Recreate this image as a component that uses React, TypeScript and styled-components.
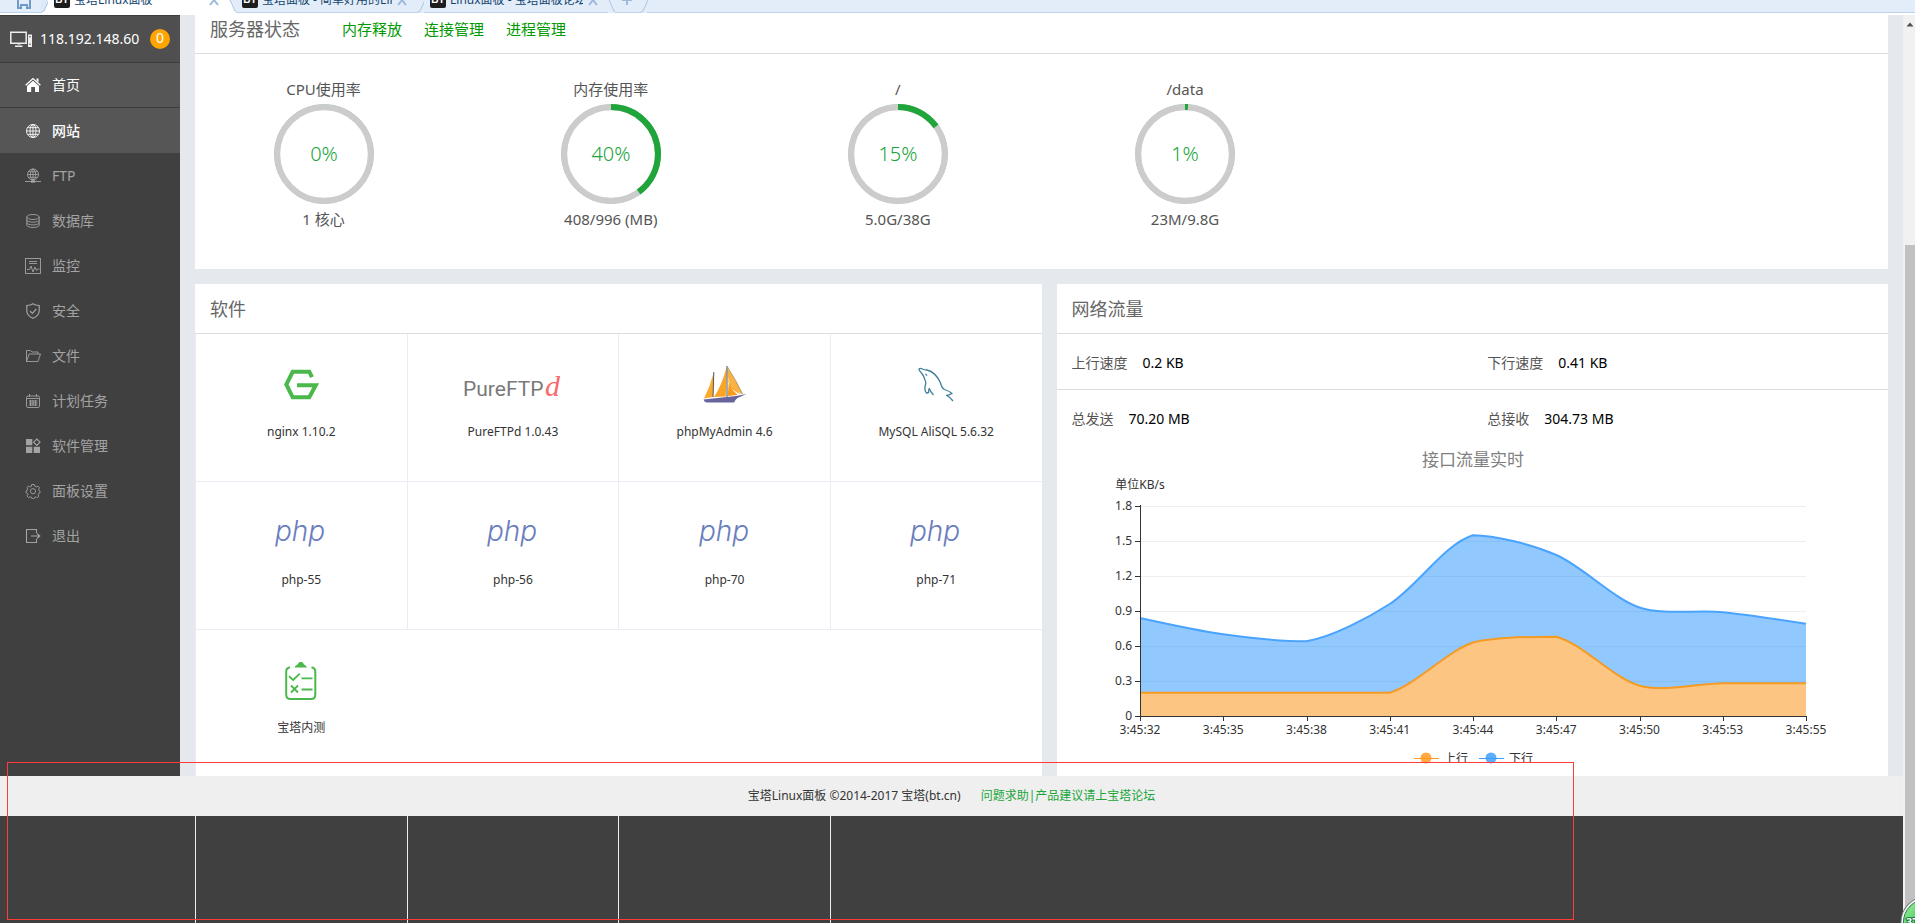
import React, { useLayoutEffect, useRef, useState } from "react";
import styled, { createGlobalStyle, css } from "styled-components";

const FONT = '"Noto Sans", "Noto Sans CJK SC", sans-serif';

const GlobalStyle = createGlobalStyle`
  * { box-sizing: border-box; }
  body { margin: 0; background: #404040; font: 14px/20px ${FONT}; color: #555; }
  a { color: inherit; text-decoration: none; }
  button { font: inherit; color: inherit; border: 0; padding: 0; background: none; cursor: pointer; }
  h2, p, dl, dd, dt, ul { margin: 0; padding: 0; font-weight: normal; }
  ul { list-style: none; }
  svg { display: block; flex: none; }
`;

/* ---------- page frame ---------- */

const Page = styled.div`
  display: flex;
  flex-direction: column;
  min-height: 100vh;
`;
const Frame = styled.div`
  display: flex;
  flex: 1;
`;
const Panel = styled.div`
  display: flex;
  flex-direction: column;
  flex: 1;
  min-width: 0;
`;
const Upper = styled.div`
  display: flex;
`;

/* ---------- browser tabs ---------- */

const TabStrip = styled.div`
  height: 15px;
  background: #fff;
  overflow: hidden;
`;
const TabRow = styled.div`
  display: flex;
  align-items: flex-end;
  height: 13px;
  background: #e3edf9;
  font-size: 12px;
  color: #14466f;
`;
const Tab = styled.div<{ $width: number; $active?: boolean }>`
  display: flex;
  align-items: center;
  gap: 4px;
  width: ${(p) => p.$width}px;
  height: 26px;
  flex: none;
  padding: 0 10px 0 6px;
  background: ${(p) => (p.$active ? "#fff" : "#e3edf9")};
  border-bottom: 1px solid ${(p) => (p.$active ? "#fff" : "#bdd3ec")};
`;
const TabRest = styled.div`
  flex: 1;
  border-bottom: 1px solid #bdd3ec;
`;
const TabTitle = styled.button`
  display: flex;
  align-items: center;
  gap: 4px;
  flex: 1;
  min-width: 0;
  overflow: hidden;
  white-space: nowrap;
`;
const TabBadge = styled.span`
  width: 16px;
  height: 16px;
  flex: none;
  border-radius: 2px;
  background: #1d1d1d;
  color: #fff;
  font: bold 10px/16px "Liberation Sans", sans-serif;
  text-align: center;
`;
const IconButton = styled.button`
  display: flex;
  color: #9db9dc;
`;
const SlantSvg = styled.svg`
  margin: 0 -1px;
`;

function Slant({ back, left, right }: { back?: boolean; left: string; right: string }) {
  const line = back ? "M1 0 L6 11 L8 12.5" : "M8 0 L3 11 L0 12.5";
  const fill = back ? "M0 0 H1 L6 11 L8 13 H0Z" : "M0 0 H8 L3 11 L0 13Z";
  return (
    <SlantSvg width="8" height="13" viewBox="0 0 8 13" aria-hidden="true">
      <rect width="8" height="13" fill={right} />
      <path d={fill} fill={left} />
      <path d={line} fill="none" stroke="#aac5e3" />
    </SlantSvg>
  );
}

function CloseMark() {
  return (
    <IconButton aria-label="关闭">
      <svg width="12" height="12" viewBox="0 0 12 12" fill="none" stroke="currentColor" strokeWidth="2">
        <path d="M2 1 L10 11 M10 1 L2 11" />
      </svg>
    </IconButton>
  );
}

function BrowserTabs() {
  return (
    <TabStrip>
      <TabRow>
        <Tab $width={42}>
          <IconButton aria-label="主页">
            <svg width="32" height="20" viewBox="0 0 32 20" fill="none" stroke="#6f9bcb" strokeWidth="2">
              <path d="M7 9 L18 0 L29 9 H24 V18 H21 V15 H15 V18 H12 V9Z" />
            </svg>
          </IconButton>
        </Tab>
        <Slant left="#dce9f8" right="#fff" />
        <Tab $width={182} $active>
          <TabTitle><TabBadge>BT</TabBadge>宝塔Linux面板</TabTitle>
          <CloseMark />
        </Tab>
        <Slant back left="#fff" right="#e3edf9" />
        <Tab $width={182}>
          <TabTitle><TabBadge>BT</TabBadge>宝塔面板 - 简单好用的Linux</TabTitle>
          <CloseMark />
        </Tab>
        <Slant left="#e3edf9" right="#e3edf9" />
        <Tab $width={185}>
          <TabTitle><TabBadge>BT</TabBadge>Linux面板 - 宝塔面板论坛</TabTitle>
          <CloseMark />
        </Tab>
        <Slant back left="#e3edf9" right="#e3edf9" />
        <Tab $width={26}>
          <IconButton aria-label="新标签页">
            <svg width="12" height="12" viewBox="0 0 12 12" fill="none" stroke="currentColor" strokeWidth="2">
              <path d="M6 0 V11 M1 6 H11" />
            </svg>
          </IconButton>
        </Tab>
        <Slant left="#e3edf9" right="#e3edf9" />
        <TabRest />
      </TabRow>
    </TabStrip>
  );
}

/* ---------- sidebar ---------- */

const Sidebar = styled.nav`
  width: 180px;
  flex: none;
  background: #404040;
`;
const Host = styled.div`
  display: flex;
  align-items: center;
  height: 48px;
  padding: 0 10px;
  background: #4f4f4f;
  border-bottom: 1px solid #3c3c3c;
  border-top: 1px solid #3c3c3c;
  color: #fff;
`;
const HostName = styled.span`
  flex: 1;
  padding-left: 8px;
`;
const Count = styled.span`
  width: 20px;
  height: 20px;
  border-radius: 50%;
  background: #ffa500;
  line-height: 18px;
  text-align: center;
`;
const NavLink = styled.a<{ $tone?: "current" | "hover" }>`
  display: flex;
  align-items: center;
  gap: 11px;
  height: 45px;
  padding-left: 25px;
  color: #a3a3a3;
  ${(p) => p.$tone && css`
    background: #565656;
    color: #fff;
  `}
  ${(p) => p.$tone === "current" && css`border-bottom: 1px solid #3c3c3c;`}
  ${(p) => p.$tone === "hover" && css`font-weight: 500;`}
`;

const navGlyphs: Record<string, React.ReactNode> = {
  home: (
    <g fill="currentColor" stroke="none">
      <path d="M8 3.8 L14 9 V15 H10 V10 H6.2 V15 H2 V9Z" />
      <path d="M0.6 8.2 L8 1.6 L15.4 8.2" fill="none" stroke="currentColor" strokeWidth="1.3" />
      <path d="M11.5 1.5 h2 v4 l-2 -1.8z" />
    </g>
  ),
  globe: (
    <g>
      <circle cx="8" cy="8" r="6.5" />
      <ellipse cx="8" cy="8" rx="3" ry="6.5" />
      <path d="M8 1.5 V14.5 M1.5 8 H14.5 M2.6 4.7 H13.4 M2.6 11.3 H13.4" />
    </g>
  ),
  ftp: (
    <g>
      <circle cx="8" cy="6.5" r="5.5" />
      <ellipse cx="8" cy="6.5" rx="2.6" ry="5.5" />
      <path d="M8 1 V14 M2.5 6.5 H13.5 M3.5 3.7 H12.5 M3.5 9.3 H12.5 M0 13.5 H16" />
      <path d="M6 13.5 H10" strokeWidth="2.4" />
    </g>
  ),
  database: (
    <g>
      <ellipse cx="8" cy="4" rx="6.2" ry="2.5" />
      <path d="M1.8 4 V12 C1.8 15.3 14.2 15.3 14.2 12 V4 M1.8 6.8 C1.8 10 14.2 10 14.2 6.8 M1.8 9.5 C1.8 12.7 14.2 12.7 14.2 9.5" />
    </g>
  ),
  monitor: (
    <g>
      <rect x="0.5" y="0.5" width="15" height="15" />
      <path d="M4 3.5 H12 M4 5.5 H12 M2 11.5 H4.5 L6 8 L8 14 L10 9 L11.5 12.5 L12.5 11 H14.5" />
    </g>
  ),
  shield: (
    <g>
      <path d="M8 0.8 C10 2.4 12.5 2.5 14.2 2.5 V8 C14.2 11.5 11 14 8 15.3 C5 14 1.8 11.5 1.8 8 V2.5 C3.5 2.5 6 2.4 8 0.8Z" strokeWidth="1.2" />
      <path d="M5 8 L7.3 10.3 L11.3 6" strokeWidth="1.2" />
    </g>
  ),
  folder: (
    <path d="M1.5 13.5 V2.5 H5.5 L7 4 H13 V6 M1.5 13.5 H13 L15.5 6 H4 L1.5 13.5" />
  ),
  calendar: (
    <g>
      <rect x="1.5" y="3" width="13" height="11.5" rx="1.5" />
      <path d="M4.5 1 V4 M11.5 1 V4 M2 5.5 H14 M4 8 H12.5 M4 10 H12.5 M4 12 H12.5" />
      <path d="M5.5 7 V13 M8 7 V13 M10.5 7 V13" />
    </g>
  ),
  apps: (
    <g>
      <path d="M1 1 h6.3 v6.3 h-6.3z M1 8.7 h6.3 v6.3 h-6.3z M8.7 8.7 h6.3 v6.3 h-6.3z" fill="currentColor" stroke="none" />
      <path d="M11.8 1 L15 4.2 L11.8 7.4 L8.6 4.2Z" strokeWidth="1.2" />
    </g>
  ),
  gear: (
    <g>
      <path d="M6.7 1.5 h2.6 l0.4 1.7 1.7 0.8 1.6 -0.9 1.5 1.8 -0.9 1.5 0.4 1.2 1 0.4 v1.8 l-1.3 0.5 -0.5 1.4 0.8 1.5 -1.6 1.5 -1.5 -0.8 -1.4 0.5 -0.4 1.3 h-2.2 l-0.4 -1.4 -1.5 -0.5 -1.5 0.8 -1.5 -1.7 0.8 -1.4 -0.5 -1.3 -1.3 -0.5 v-1.8 l1.2 -0.4 0.5 -1.3 -0.8 -1.5 1.6 -1.6 1.5 0.9 1.4 -0.7z" strokeWidth="0.9" />
      <circle cx="8" cy="8.2" r="2.6" />
    </g>
  ),
  exit: (
    <path d="M11.5 5 V1.5 H1.5 V14.5 H11.5 V11 M6 8 H14.5 M12 5.5 L14.8 8 L12 10.5" strokeWidth="1.1" />
  ),
};

const navItems: { label: string; glyph: string; tone?: "current" | "hover" }[] = [
  { label: "首页", glyph: "home", tone: "current" },
  { label: "网站", glyph: "globe", tone: "hover" },
  { label: "FTP", glyph: "ftp" },
  { label: "数据库", glyph: "database" },
  { label: "监控", glyph: "monitor" },
  { label: "安全", glyph: "shield" },
  { label: "文件", glyph: "folder" },
  { label: "计划任务", glyph: "calendar" },
  { label: "软件管理", glyph: "apps" },
  { label: "面板设置", glyph: "gear" },
  { label: "退出", glyph: "exit" },
];

function SideNav() {
  return (
    <Sidebar>
      <Host>
        <svg width="22" height="17" viewBox="0 0 22 17" fill="none" stroke="#eee" strokeWidth="1.5" aria-hidden="true">
          <path d="M0.8 1.3 H16.2 V12.2 H0.8Z M5 15.2 H12.5" />
          <path d="M7.5 13 H10.5" strokeWidth="1" />
          <rect x="18" y="3.5" width="4" height="12.5" fill="#eee" stroke="none" />
          <path d="M19 5.8 H21 M19 13.2 H21" stroke="#666" strokeWidth="1" />
        </svg>
        <HostName>118.192.148.60</HostName>
        <Count>0</Count>
      </Host>
      <ul>
        {navItems.map((item) => (
          <li key={item.label}>
            <NavLink href="#" $tone={item.tone}>
              <svg width="16" height="16" viewBox="0 0 16 16" fill="none" stroke="currentColor" strokeWidth="0.9" aria-hidden="true">
                {navGlyphs[item.glyph]}
              </svg>
              {item.label}
            </NavLink>
          </li>
        ))}
      </ul>
    </Sidebar>
  );
}

/* ---------- cards ---------- */

const Main = styled.main`
  display: flex;
  flex-direction: column;
  gap: 15px;
  flex: 1;
  min-width: 0;
  padding: 0 15px;
  background: #e5e9ee;
`;
const Card = styled.section`
  background: #fff;
`;
const CardHead = styled.header<{ $cut?: boolean }>`
  display: flex;
  align-items: center;
  gap: 42px;
  height: ${(p) => (p.$cut ? 39 : 50)}px;
  padding: 0 15px ${(p) => (p.$cut ? 10 : 0)}px;
  border-bottom: 1px solid #dcdde0;
`;
const CardTitle = styled.h2`
  font-size: 18px;
  line-height: 26px;
  color: #666;
`;
const HeadLinks = styled.div`
  display: flex;
  gap: 22px;
  font-size: 15px;
  color: #009900;
`;

const GaugeGrid = styled.div`
  display: grid;
  grid-template-columns: repeat(6, 1fr);
  margin: 0 -15px;
  padding: 24px 0 39px;
`;
const GaugeCell = styled.div`
  display: flex;
  flex-direction: column;
  align-items: center;
  gap: 4px;
  font-size: 15px;
  line-height: 22px;
`;

const gauges = [
  { title: "CPU使用率", value: 0, detail: "1 核心" },
  { title: "内存使用率", value: 40, detail: "408/996 (MB)" },
  { title: "/", value: 15, detail: "5.0G/38G" },
  { title: "/data", value: 1, detail: "23M/9.8G" },
];

function Gauge({ title, value, detail }: { title: string; value: number; detail: string }) {
  return (
    <GaugeCell>
      <span>{title}</span>
      <svg width="100" height="100" viewBox="0 0 100 100" role="img" aria-label={`${title} ${value}%`}>
        <circle cx="50" cy="50" r="49.5" fill="none" stroke="#a5cfad" strokeWidth="1" />
        <circle cx="50" cy="50" r="46.8" fill="none" stroke="#ccc" strokeWidth="6" />
        <circle
          cx="50" cy="50" r="47" fill="none" stroke="#20a53a" strokeWidth="6"
          pathLength="100" strokeDasharray={`${value} 100`} transform="rotate(-90 50 50)"
          visibility={value ? "visible" : "hidden"}
        />
        <text x="50" y="57" textAnchor="middle" fontSize="20" fontWeight="300" fill="#20a53a">{value}%</text>
      </svg>
      <span>{detail}</span>
    </GaugeCell>
  );
}

/* ---------- software ---------- */

const Split = styled.div`
  display: grid;
  grid-template-columns: 1fr 1fr;
`;
const SplitRight = styled.div`
  display: flex;
  flex-direction: column;
  min-width: 0;
  padding-left: 15px;
`;
const SoftCard = styled(Card)`
  display: flex;
  flex-direction: column;
  min-width: 0;
`;
const SoftGrid = styled.div`
  display: grid;
  grid-template-columns: repeat(4, 1fr);
  grid-template-rows: 148px 148px 1fr;
  flex: 1;
`;
const SoftTile = styled.a<{ $last?: boolean }>`
  display: flex;
  flex-direction: column;
  align-items: center;
  gap: 10px;
  padding-top: 23px;
  font-size: 12px;
  line-height: 20px;
  color: #333;
  border-left: 1px solid #ececf6;
  border-bottom: ${(p) => (p.$last ? "0" : "1px solid #ececf6")};
`;
const LogoBox = styled.span`
  display: flex;
  align-items: center;
  justify-content: center;
  height: 55px;
`;

const PhpLogo = () => (
  <svg width="60" height="40" viewBox="0 0 60 40" role="img" aria-label="php">
    <text x="29" y="28" textAnchor="middle" fontFamily="Inter, sans-serif" fontWeight="300" fontStyle="italic"
      fontSize="28" fill="#6a7dbd">php</text>
  </svg>
);
const NginxLogo = () => (
  <svg width="35" height="31" viewBox="0 -1 35 31" fill="none" stroke="#4bb84b" strokeWidth="4" aria-hidden="true">
    <path d="M28 7.2 L25.3 1.8 H8.7 L2.3 14.5 L8.7 27.3 H25.3 L31.8 15.2 H13" />
  </svg>
);
const PureFtpdLogo = () => (
  <svg width="106" height="40" viewBox="0 0 106 40" role="img" aria-label="PureFTPd">
    <text x="3" y="31" fontFamily="Roboto, sans-serif" fontSize="21" fill="#7a7a7a">PureFTP</text>
    <text x="85" y="31" fontFamily='"Liberation Serif", serif' fontStyle="italic" fontSize="30" fill="#fb6a6a">d</text>
  </svg>
);
const SailLogo = () => (
  <svg width="44" height="40" viewBox="0 0 44 40" aria-hidden="true">
    <path d="M10.6 8 L10 32 L1 33.5 Q7 22 10.6 8Z" fill="#fbab2c" />
    <path d="M23.6 2 L22.8 31.5 L11 32 Q19 20 23.6 2Z" fill="#f9a526" />
    <path d="M24.8 13 Q27 22 39 29.5 Q32 28 26 20 Z" fill="#f9a526" />
    <path d="M24.5 3 Q32 14 39.5 29 Q28 25 24.8 12Z" fill="#fcb040" />
    <path d="M25.6 19 Q30 26 34.5 30 L24.8 31Z" fill="#f89c1c" />
    <path d="M10.8 7 L10 32 M24 1 V32" stroke="#555" strokeWidth="1" fill="none" />
    <path d="M0.5 34.5 L33 31 L43.5 29 L34.5 33 Q32 35 31 37.5 H4 Q1 37 0.5 34.5Z" fill="#68659c" />
    <path d="M24.5 2 Q33 15 39.5 29" stroke="#8a7a50" strokeWidth="0.7" fill="none" />
  </svg>
);
const DolphinLogo = () => (
  <svg width="36" height="36" viewBox="0 0 36 36" fill="none" stroke="#3f7f9b" strokeWidth="1.3" strokeLinejoin="round" aria-hidden="true">
    <path d="M15.5 28 Q12.5 25 11.3 21.5 Q10.5 22 10.6 25.5 L8.5 26 Q6 23.5 7.3 18.5 Q8.3 15 7 13 Q6 9 3.5 6 Q0.6 3 1 2 Q1.8 0.6 4.5 2 Q6 3 9 3 Q17.5 5 22.5 16 Q24 21.5 26.5 22.5 Q31 23.8 34 26.5 Q31 28.3 28.5 28.3 Q32.5 30.5 35 34" />
    <path d="M7.6 7 L9 8.6" strokeWidth="1.2" />
  </svg>
);
const ClipboardLogo = () => (
  <svg width="32" height="40" viewBox="0 0 32 40" fill="none" stroke="#4bb84b" strokeWidth="2" aria-hidden="true">
    <path d="M5 6.2 Q1.2 7 1.2 10.5 V33.5 Q1.2 38 5.5 38 H26 Q30.3 38 30.3 33.5 V10.5 Q30.3 7 26.5 6.2" />
    <path d="M9.5 6.5 Q10 4.5 12.5 3.6 Q13.5 0.8 15.8 0.8 Q18 0.8 19 3.6 Q21.5 4.5 22 6.5Z" fill="#4bb84b" stroke="none" />
    <path d="M4 15.3 L8.2 19 L14.7 12.7 M16.5 17.3 H27.5 M16.5 28.5 H27.5 M6 24.5 L13 31.5 M13 24.5 L6 31.5" strokeWidth="1.8" />
  </svg>
);

const software: { name: string; logo: React.ReactNode; last?: boolean }[] = [
  { name: "nginx 1.10.2", logo: <NginxLogo /> },
  { name: "PureFTPd 1.0.43", logo: <PureFtpdLogo /> },
  { name: "phpMyAdmin 4.6", logo: <SailLogo /> },
  { name: "MySQL AliSQL 5.6.32", logo: <DolphinLogo /> },
  { name: "php-55", logo: <PhpLogo /> },
  { name: "php-56", logo: <PhpLogo /> },
  { name: "php-70", logo: <PhpLogo /> },
  { name: "php-71", logo: <PhpLogo /> },
  { name: "宝塔内测", logo: <ClipboardLogo />, last: true },
];

/* ---------- network ---------- */

const NetRow = styled.dl<{ $line?: boolean }>`
  display: grid;
  grid-template-columns: 1fr 1fr;
  height: 56px;
  border-bottom: 1px solid ${(p) => (p.$line ? "#dcdde0" : "transparent")};
`;
const NetItem = styled.div`
  display: flex;
  align-items: center;
  gap: 15px;
  padding: 3px 15px 0;
  dd { color: #000; }
`;
const ChartBox = styled.div`
  height: 330px;
  svg { width: 100%; }
`;

const times = ["3:45:32", "3:45:35", "3:45:38", "3:45:41", "3:45:44", "3:45:47", "3:45:50", "3:45:53", "3:45:55"];
const upload = [0.2, 0.2, 0.2, 0.2, 0.63, 0.68, 0.26, 0.28, 0.28];
const download = [0.84, 0.7, 0.64, 0.96, 1.55, 1.38, 0.93, 0.89, 0.79];
const ticks = [0, 0.3, 0.6, 0.9, 1.2, 1.5, 1.8];

type Point = [number, number];

/* Bezier smoothing whose control points stay inside the bounds of the series. */
function smoothPath(points: Point[], smooth = 0.3) {
  const xs = points.map((p) => p[0]);
  const ys = points.map((p) => p[1]);
  const clamp = (v: number, list: number[]) => Math.max(Math.min(...list), Math.min(Math.max(...list), v));
  const bound = (x: number, y: number): Point => [clamp(x, xs), clamp(y, ys)];
  let handle: Point = points[0];
  let d = `M${points[0]}`;
  for (let i = 1; i < points.length; i++) {
    const prev = points[i - 1];
    const p = points[i];
    const next = points[i + 1];
    let incoming: Point = p;
    let outgoing: Point = p;
    if (next) {
      const vx = next[0] - prev[0];
      const vy = next[1] - prev[1];
      const a = Math.hypot(p[0] - prev[0], p[1] - prev[1]);
      const b = Math.hypot(next[0] - p[0], next[1] - p[1]);
      const ratio = b / (a + b);
      incoming = bound(p[0] - vx * smooth * (1 - ratio), p[1] - vy * smooth * (1 - ratio));
      outgoing = bound(p[0] + vx * smooth * ratio, p[1] + vy * smooth * ratio);
    }
    d += ` C${handle} ${incoming} ${p}`;
    handle = outgoing;
  }
  return d;
}

function TrafficChart() {
  const box = useRef<HTMLDivElement>(null);
  const [width, setWidth] = useState(831);
  useLayoutEffect(() => {
    const node = box.current;
    if (!node) return;
    const measure = () => setWidth(Math.floor(node.clientWidth));
    measure();
    const observer = new ResizeObserver(measure);
    observer.observe(node);
    return () => observer.disconnect();
  }, []);

  const left = Math.round(width * 0.1);
  const right = width - left;
  const base = 270;
  const top = 60;
  const x = (i: number) => left + (i * (right - left)) / (times.length - 1);
  const y = (v: number) => base - (v / 1.8) * (base - top);
  const crisp = (v: number) => Math.round(v) + 0.5;
  const mid = Math.round(width / 2);

  const series = [
    { data: download, line: "#4aa3ff", fill: "#1e90ff", opacity: 0.49 },
    { data: upload, line: "#f59a23", fill: "#ffc580", opacity: 0.98 },
  ];

  return (
    <ChartBox ref={box}>
      <svg height="330" role="img" aria-label="接口流量实时" fontFamily={FONT}>
        <defs>
          <clipPath id="legend-clip"><rect width="100%" height="316" /></clipPath>
        </defs>
        <text x={mid} y="20" textAnchor="middle" fontSize="17" fill="#808080">接口流量实时</text>
        <text x={left} y="43" textAnchor="middle" fontSize="12" fill="#333">单位KB/s</text>
        {ticks.map((t) => (
          <line key={t} x1={left} x2={right} y1={crisp(y(t))} y2={crisp(y(t))} stroke="#eee" />
        ))}
        {series.map((s) => {
          const d = smoothPath(s.data.map((v, i) => [x(i), y(v)] as Point));
          return (
            <g key={s.line}>
              <path d={`${d} L${right} ${base} L${left} ${base}Z`} fill={s.fill} fillOpacity={s.opacity} />
              <path d={d} fill="none" stroke={s.line} strokeWidth="2" />
            </g>
          );
        })}
        <path d={`M${left + 0.5} ${top - 1} V${base + 0.5} H${right + 1}`} fill="none" stroke="#333" />
        {ticks.map((t) => (
          <g key={t}>
            <line x1={left - 5} x2={left} y1={crisp(y(t))} y2={crisp(y(t))} stroke="#333" />
            <text x={left - 8} y={y(t) + 4} textAnchor="end" fontSize="12" fill="#333">{t}</text>
          </g>
        ))}
        {times.map((t, i) => (
          <g key={t}>
            <line x1={crisp(x(i))} x2={crisp(x(i))} y1={base} y2={base + 5} stroke="#333" />
            <text x={x(i)} y={base + 18} textAnchor="middle" fontSize="12" fill="#333">{t}</text>
          </g>
        ))}
        {[
          { name: "上行", at: mid - 59, tone: "#ffa940", rule: "#ff9a1f" },
          { name: "下行", at: mid + 6, tone: "#5badff", rule: "#3e9dff" },
        ].map((item) => (
          <g key={item.name}>
            <circle cx={item.at + 12} cy="312" r="5.5" fill={item.tone} />
            <line x1={item.at} x2={item.at + 25} y1="312.5" y2="312.5" stroke={item.rule} />
            <text x={item.at + 30} y="317" fontSize="12" fill="#333" clipPath="url(#legend-clip)">{item.name}</text>
          </g>
        ))}
      </svg>
    </ChartBox>
  );
}

/* ---------- lower part ---------- */

const Lower = styled.div`
  position: relative;
  display: flex;
  flex-direction: column;
  flex: 1;
`;
const Footer = styled.footer`
  display: flex;
  align-items: center;
  justify-content: center;
  gap: 20px;
  height: 40px;
  background: #efefef;
  font-size: 12px;
  color: #333;
  a { color: #20a53a; }
`;
const Tail = styled.div`
  display: flex;
  flex: 1;
  min-height: 100px;
  padding: 0 15px 0 195px;
  background: #404040;
`;
const TailGrid = styled.div`
  display: grid;
  grid-template-columns: repeat(4, 1fr);
  width: 50%;
`;
const TailCell = styled.div`
  border-left: 1px solid #ececf6;
`;
const Highlight = styled.div`
  position: absolute;
  inset: -14px 329px 3px 7px;
  border: 1px solid #ff3b3b;
  pointer-events: none;
`;

const TailEnd = styled.div`
  width: 1px;
`;

const ScrollTrack = styled.div`
  display: flex;
  flex-direction: column;
  width: 12px;
  flex: none;
  padding-left: 2px;
  background: #f1f1f1;
`;
const ScrollArrow = styled.svg`
  margin: 5px 0 216px;
`;
const ScrollThumb = styled.div`
  flex: 1;
  background: #c1c1c1;
`;
const Speed = styled.div`
  position: fixed;
  right: 0;
  bottom: 0;
  width: 20px;
  height: 32px;
  overflow: hidden;
`;

export default function App() {
  return (
    <Page>
      <GlobalStyle />
      <BrowserTabs />
      <Frame>
        <Panel>
          <Upper>
            <SideNav />
            <Main>
              <Card>
                <CardHead $cut>
                  <CardTitle>服务器状态</CardTitle>
                  <HeadLinks>
                    <a href="#">内存释放</a>
                    <a href="#">连接管理</a>
                    <a href="#">进程管理</a>
                  </HeadLinks>
                </CardHead>
                <GaugeGrid>
                  {gauges.map((g) => <Gauge key={g.title} {...g} />)}
                </GaugeGrid>
              </Card>
              <Split>
                <SoftCard>
                  <CardHead><CardTitle>软件</CardTitle></CardHead>
                  <SoftGrid>
                    {software.map((s) => (
                      <SoftTile key={s.name} href="#" $last={s.last}>
                        <LogoBox>{s.logo}</LogoBox>
                        {s.name}
                      </SoftTile>
                    ))}
                  </SoftGrid>
                </SoftCard>
                <SplitRight>
                  <Card>
                    <CardHead><CardTitle>网络流量</CardTitle></CardHead>
                    <NetRow $line>
                      <NetItem><dt>上行速度</dt><dd>0.2 KB</dd></NetItem>
                      <NetItem><dt>下行速度</dt><dd>0.41 KB</dd></NetItem>
                    </NetRow>
                    <NetRow>
                      <NetItem><dt>总发送</dt><dd>70.20 MB</dd></NetItem>
                      <NetItem><dt>总接收</dt><dd>304.73 MB</dd></NetItem>
                    </NetRow>
                    <TrafficChart />
                  </Card>
                </SplitRight>
              </Split>
            </Main>
          </Upper>
          <Lower>
            <Footer>
              <span>宝塔Linux面板 ©2014-2017 宝塔(bt.cn)</span>
              <a href="#">问题求助|产品建议请上宝塔论坛</a>
            </Footer>
            <Tail>
              <TailGrid><TailCell /><TailCell /><TailCell /><TailCell /></TailGrid>
              <TailEnd />
            </Tail>
            <Highlight />
          </Lower>
        </Panel>
        <ScrollTrack>
          <ScrollArrow width="10" height="9" viewBox="0 0 10 9" aria-hidden="true">
            <path d="M5 2.5 L8.5 6.5 H1.5Z" fill="#505050" />
          </ScrollArrow>
          <ScrollThumb />
        </ScrollTrack>
      </Frame>
      <Speed>
        <svg width="56" height="56" viewBox="0 0 56 56" aria-hidden="true">
          <defs>
            <radialGradient id="ball" cx="50%" cy="60%" r="60%">
              <stop offset="0" stopColor="#35c24a" />
              <stop offset="1" stopColor="#8be58f" />
            </radialGradient>
          </defs>
          <circle cx="31" cy="31" r="25.5" fill="#777" />
          <circle cx="31" cy="31" r="24.5" fill="#fff" />
          <circle cx="31" cy="31" r="22.5" fill="url(#ball)" stroke="#1c7a3c" strokeWidth="1" />
          <text x="11" y="35" fontSize="11" fontWeight="bold" fill="#fff" stroke="#1c7a3c" strokeWidth="2" paintOrder="stroke">37%</text>
        </svg>
      </Speed>
    </Page>
  );
}
